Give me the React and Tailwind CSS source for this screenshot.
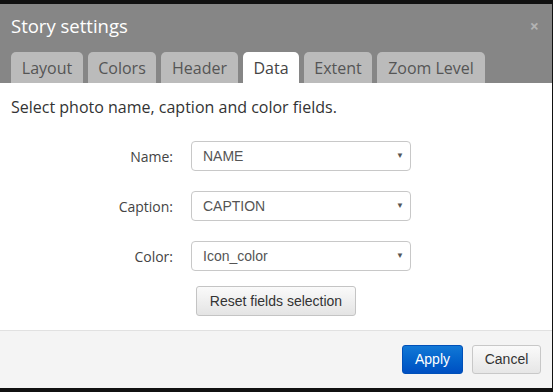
import React, { useState } from 'react';

const tabs = [
  { name: 'Layout', w: 'w-[72px]' },
  { name: 'Colors', w: 'w-[68px]' },
  { name: 'Header', w: 'w-[77px]' },
  { name: 'Data', w: 'w-[56px]' },
  { name: 'Extent', w: 'w-[68px]' },
  { name: 'Zoom Level', w: 'w-[108px]' },
];

const fields = [
  { label: 'Name:', value: 'NAME' },
  { label: 'Caption:', value: 'CAPTION' },
  { label: 'Color:', value: 'Icon_color' },
];

const FieldSelect = ({ label, value }) => (
  <div className="flex items-center h-[30px]">
    <label className="w-[173px] text-right text-[14px] text-[#444]">{label}</label>
    <div className="ml-[18px] w-[220px] h-[30px] border border-[#c8c8c8] rounded-[4px] bg-white flex items-center justify-between pl-[11px] pr-[6px] font-['Liberation_Sans',Arial,sans-serif] text-[14px] text-[#555]">
      <span>{value}</span>
      <span className="text-[8px] text-[#555]">▼</span>
    </div>
  </div>
);

const App = () => {
  const [active] = useState('Data');

  return (
    <div className="w-[553px] h-[392px] bg-[#111] pt-[4px] pb-[4px] font-['Open_Sans',sans-serif]">
      <div className="h-full bg-white flex flex-col mr-[1px]">
        {/* header */}
        <div className="bg-[#868686] h-[79px] flex flex-col">
          <div className="flex items-center justify-between pl-[11px] pr-[13px] h-[44px]">
            <h2 className="text-white text-[18.5px] leading-none">Story settings</h2>
            <span className="text-[#b3b3b3] text-[16px] font-bold leading-none">×</span>
          </div>
          <div className="flex gap-[5px] pl-[11px] mt-auto">
            {tabs.map((t) => (
              <div
                key={t.name}
                className={
                  t.name === active
                    ? `${t.w} h-[31px] flex items-center justify-center rounded-t-[5px] bg-white text-[16px] text-[#444]`
                    : `${t.w} h-[31px] flex items-center justify-center rounded-t-[5px] bg-[#bbbbbb] text-[16px] text-[#555]`
                }
              >
                {t.name}
              </div>
            ))}
          </div>
        </div>

        {/* body */}
        <div className="flex-1 flex flex-col">
          <p className="pl-[11px] pt-[13px] text-[16px] text-[#333] leading-[22px]">
            Select photo name, caption and color fields.
          </p>
          <div className="mt-[23px] flex flex-col gap-[20px]">
            {fields.map((f) => (
              <FieldSelect key={f.label} {...f} />
            ))}
          </div>
          <div className="mt-[15px] pl-[196px]">
            <button className="w-[160px] h-[30px] border border-[#c4c4c4] rounded-[3px] bg-gradient-to-b from-[#fafafa] to-[#e4e4e4] font-['Liberation_Sans',Arial,sans-serif] text-[14px] text-[#333]">
              Reset fields selection
            </button>
          </div>
        </div>

        {/* footer */}
        <div className="h-[58px] border-t border-[#e1e1e1] bg-[#f4f4f4] flex items-center justify-end gap-[9px] pr-[11px]">
          <button className="w-[61px] h-[29px] rounded-[3px] border border-[#0050b8] bg-gradient-to-b from-[#1278d6] to-[#004fc2] text-white font-['Liberation_Sans',Arial,sans-serif] text-[14px]">
            Apply
          </button>
          <button className="w-[69px] h-[29px] rounded-[3px] border border-[#c8c8c8] bg-gradient-to-b from-[#fafafa] to-[#e6e6e6] text-[#333] font-['Liberation_Sans',Arial,sans-serif] text-[14px]">
            Cancel
          </button>
        </div>
      </div>
    </div>
  );
};

export default App;
